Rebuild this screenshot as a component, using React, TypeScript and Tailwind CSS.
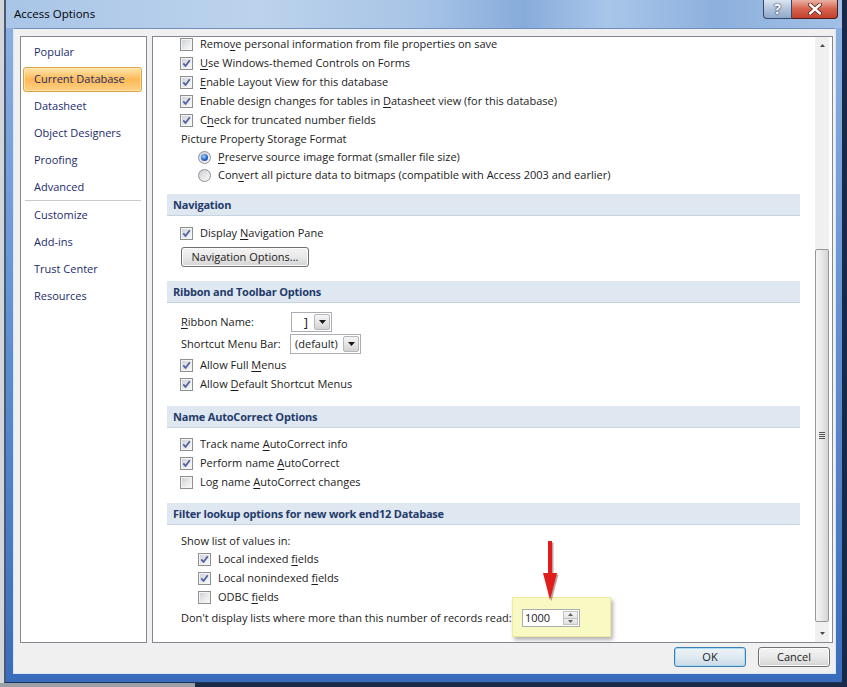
import React from "react";

const U = ({ children }: { children: React.ReactNode }) => (
  <span className="underline decoration-[1px] underline-offset-[2px]">{children}</span>
);

function CheckBox({ checked }: { checked: boolean }) {
  return (
    <span className="flex h-[13px] w-[13px] shrink-0 border border-[#8e8f8f] bg-[#f4f4f4] p-[1px]">
      <span className="flex flex-1 items-center justify-center bg-gradient-to-br from-[#cfd2d6] via-[#e6e7e9] to-[#f8f8f8]">
        {checked && (
          <svg width="9" height="9" viewBox="0 0 9 9">
            <path d="M1.3 4.4 L3.5 7 L7.8 1.3" fill="none" stroke="#4d62a0" strokeWidth="1.8" strokeLinejoin="round" />
          </svg>
        )}
      </span>
    </span>
  );
}

function Radio({ checked }: { checked: boolean }) {
  return (
    <span className="flex h-[13px] w-[13px] shrink-0 items-center justify-center rounded-full border border-[#8e8f8f] bg-gradient-to-br from-[#cdd0d4] to-[#fafafa]">
      {checked && (
        <span className="h-[7px] w-[7px] rounded-full bg-[radial-gradient(circle_at_40%_35%,#a8d6ff,#2563c4_55%,#0f3c8c)]" />
      )}
    </span>
  );
}

function CheckRow({ checked, children, cls }: { checked: boolean; children: React.ReactNode; cls: string }) {
  return (
    <div className={"flex h-[19px] items-center gap-[7px] whitespace-nowrap " + cls}>
      <CheckBox checked={checked} />
      <span className="pb-[2px]">{children}</span>
    </div>
  );
}

function RadioRow({ checked, children }: { checked: boolean; children: React.ReactNode }) {
  return (
    <div className="flex h-[18px] items-center gap-[7px] whitespace-nowrap pl-[45px]">
      <Radio checked={checked} />
      <span className="pb-[2px]">{children}</span>
    </div>
  );
}

function Band({ children, cls }: { children: React.ReactNode; cls: string }) {
  return (
    <div
      className={
        "ml-[14px] mr-[15px] flex h-[22px] items-center border-b border-[#c5d2e0] bg-[#dfe7f0] pl-[6px] font-bold tracking-[-0.2px] text-[#1f3b6b] " +
        cls
      }
    >
      {children}
    </div>
  );
}

function DropBtn() {
  return (
    <span className="my-[1px] mr-[1px] flex w-[16px] items-center justify-center rounded-[2px] border border-[#b4b7bc] bg-gradient-to-b from-[#f5f5f5] via-[#e6e6e6] to-[#d2d2d2]">
      <svg width="7" height="4" viewBox="0 0 7 4">
        <path d="M0 0 H7 L3.5 4 Z" fill="#1a1a1a" />
      </svg>
    </span>
  );
}

function NavItem({ label, active, cls }: { label: string; active?: boolean; cls: string }) {
  return (
    <div
      className={
        "flex h-[25px] items-center rounded-[3px] border pb-[2px] pl-[10px] " +
        (active
          ? "border-[#e0a043] bg-gradient-to-b from-[#fee6a8] via-[#fcb955] to-[#fdd184] shadow-[inset_0_0_0_1px_rgba(255,240,200,0.6)] "
          : "border-transparent ") +
        cls
      }
    >
      {label}
    </div>
  );
}

function TitleBar() {
  return (
    <div className="flex h-[28px] shrink-0 justify-between bg-[linear-gradient(90deg,#a9c5e7_0%,#bcd3ec_30%,#a7c3e6_50%,#87acdb_62%,#a9c6e9_72%,#8cb0dd_85%,#a2c0e5_100%)]">
      <div className="pl-[8px] pt-[8px] text-[11.5px] text-black">Access Options</div>
      <div className="mr-[4px] flex h-[19px]">
        <div className="flex w-[29px] items-center justify-center rounded-bl-[4px] border border-t-0 border-[#34496b] bg-gradient-to-b from-[#dbe5f1] via-[#b2c4dc] to-[#8fa8ca] text-[14px] font-bold text-white [text-shadow:0_0_2px_#22324d,0_0_1px_#22324d]">
          ?
        </div>
        <div className="flex w-[46px] items-center justify-center rounded-br-[4px] border border-l-0 border-t-0 border-[#4a1d1a] bg-gradient-to-b from-[#eab1a5] via-[#d4624d] to-[#c2412c]">
          <svg width="14" height="12" viewBox="0 0 14 12">
            <path d="M2 1.5 L12 10.5 M12 1.5 L2 10.5" stroke="#5a1a12" strokeWidth="4" strokeLinecap="round" />
            <path d="M2 1.5 L12 10.5 M12 1.5 L2 10.5" stroke="#ffffff" strokeWidth="2.4" strokeLinecap="round" />
          </svg>
        </div>
      </div>
    </div>
  );
}

function Scrollbar() {
  return (
    <div className="mr-[3px] flex w-[14px] shrink-0 flex-col bg-[#f0f0f0]">
      <div className="flex h-[17px] items-center justify-center">
        <svg width="5" height="3" viewBox="0 0 5 3">
          <path d="M0 3 L2.5 0 L5 3 Z" fill="#4a4a4a" />
        </svg>
      </div>
      <div className="h-[195px]" />
      <div className="flex h-[373px] items-center justify-center rounded-[2px] border border-[#979797] bg-gradient-to-r from-[#f4f4f4] via-[#e8e8e8] to-[#d4d4d4]">
        <div className="flex flex-col gap-[1px]">
          <div className="h-[1px] w-[6px] bg-[#555]" />
          <div className="h-[1px] w-[6px] bg-[#555]" />
          <div className="h-[1px] w-[6px] bg-[#555]" />
          <div className="h-[1px] w-[6px] bg-[#555]" />
        </div>
      </div>
      <div className="flex-1" />
      <div className="flex h-[17px] items-center justify-center">
        <svg width="5" height="3" viewBox="0 0 5 3">
          <path d="M0 0 L2.5 3 L5 0 Z" fill="#4a4a4a" />
        </svg>
      </div>
    </div>
  );
}

export default function App() {
  return (
    <div className="flex h-[687px] w-[847px] flex-col overflow-hidden bg-[#1b2a47] font-['Open_Sans',sans-serif] text-[11px] leading-none text-[#1b1b1b]">
      <div className="flex h-[683px] shrink-0">
        <div className="w-[4px] bg-[#d3d7dc]" />
        <div className="flex flex-1 flex-col border-b border-l-[2px] border-r-[5px] border-b-[#1e3358] border-l-[#4a5a72] border-r-[#172848] bg-gradient-to-b from-[#8eb2e2] via-[#5f8fd2] to-[#3a6cbc]">
          <TitleBar />
          <div className="mb-[8px] ml-[7px] mr-[6px] flex flex-1 flex-col border border-[#dbe6f3] border-t-[#6f8db5] bg-[#f0f0f0] pl-[6px] pr-[2px] pt-[7px]">
            <div className="flex h-[607px] gap-[5px]">
              {/* Left navigation */}
              <div className="flex w-[127px] shrink-0 flex-col border border-[#828790] bg-white pl-[2px] pr-[4px] pt-[3px] text-[#1c2c6c]">
                <NavItem label="Popular" cls="" />
                <NavItem label="Current Database" active cls="mt-[2px]" />
                <NavItem label="Datasheet" cls="mt-[2px]" />
                <NavItem label="Object Designers" cls="mt-[2px]" />
                <NavItem label="Proofing" cls="mt-[2px]" />
                <NavItem label="Advanced" cls="mt-[2px]" />
                <div className="ml-[2px] mr-[1px] h-[2px] border-t border-[#c9c9c9] bg-white" />
                <NavItem label="Customize" cls="mt-[1px]" />
                <NavItem label="Add-ins" cls="mt-[2px]" />
                <NavItem label="Trust Center" cls="mt-[2px]" />
                <NavItem label="Resources" cls="mt-[2px]" />
              </div>

              {/* Right content */}
              <div className="flex flex-1 border border-[#828790] bg-white">
                <div className="flex-1 overflow-hidden">
                  <div className="-mt-[2px] flex flex-col">
                    <CheckRow checked={false} cls="pl-[27px]">
                      Remo<U>v</U>e personal information from file properties on save
                    </CheckRow>
                    <CheckRow checked cls="pl-[27px]">
                      <U>U</U>se Windows-themed Controls on Forms
                    </CheckRow>
                    <CheckRow checked cls="pl-[27px]">
                      <U>E</U>nable Layout View for this database
                    </CheckRow>
                    <CheckRow checked cls="pl-[27px]">
                      Enable design changes for tables in <U>D</U>atasheet view (for this database)
                    </CheckRow>
                    <CheckRow checked cls="pl-[27px]">
                      C<U>h</U>eck for truncated number fields
                    </CheckRow>
                    <div className="flex h-[18px] items-center pb-[2px] pl-[28px]">Picture Property Storage Format</div>
                    <RadioRow checked>
                      <U>P</U>reserve source image format (smaller file size)
                    </RadioRow>
                    <RadioRow checked={false}>
                      Con<U>v</U>ert all picture data to bitmaps (compatible with Access 2003 and earlier)
                    </RadioRow>

                    <Band cls="mt-[10px]">Navigation</Band>
                    <CheckRow checked cls="mt-[8px] pl-[27px]">
                      Display <U>N</U>avigation Pane
                    </CheckRow>
                    <div className="mt-[4px] flex pl-[28px]">
                      <button className="flex h-[20px] w-[128px] items-center justify-center rounded-[3px] border border-[#707070] bg-gradient-to-b from-[#f4f4f4] via-[#e9e9e9] to-[#d3d3d3] pb-[1px] text-[#1b1b1b] shadow-[inset_0_0_0_1px_#fbfbfb]">
                        Navigation Options...
                      </button>
                    </div>

                    <Band cls="mt-[14px]">Ribbon and Toolbar Options</Band>
                    <div className="mt-[9px] flex h-[20px] items-center pl-[28px]">
                      <span className="w-[110px] shrink-0 pb-[2px]">
                        <U>R</U>ibbon Name:
                      </span>
                      <span className="flex h-[20px] w-[41px] border border-[#abadb3] bg-white">
                        <span className="flex flex-1 items-center justify-end pr-[6px] text-[13px]">]</span>
                        <DropBtn />
                      </span>
                    </div>
                    <div className="mt-[2px] flex h-[20px] items-center pl-[28px]">
                      <span className="w-[109px] shrink-0 pb-[2px]">Shortcut Menu Bar:</span>
                      <span className="flex h-[20px] w-[71px] border border-[#abadb3] bg-white">
                        <span className="flex flex-1 items-center pb-[1px] pl-[4px]">(default)</span>
                        <DropBtn />
                      </span>
                    </div>
                    <CheckRow checked cls="mt-[2px] pl-[27px]">
                      Allow Full <U>M</U>enus
                    </CheckRow>
                    <CheckRow checked cls="pl-[27px]">
                      Allow <U>D</U>efault Shortcut Menus
                    </CheckRow>

                    <Band cls="mt-[12px]">Name AutoCorrect Options</Band>
                    <CheckRow checked cls="mt-[7px] pl-[27px]">
                      Track name <U>A</U>utoCorrect info
                    </CheckRow>
                    <CheckRow checked cls="pl-[27px]">
                      Perform name <U>A</U>utoCorrect
                    </CheckRow>
                    <CheckRow checked={false} cls="pl-[27px]">
                      Log name <U>A</U>utoCorrect changes
                    </CheckRow>

                    <Band cls="mt-[11px]">Filter lookup options for new work end12 Database</Band>
                    <div className="mt-[7px] flex h-[18px] items-center pb-[2px] pl-[28px]">Show list of values in:</div>
                    <CheckRow checked cls="pl-[45px]">
                      Local indexed <U>f</U>ields
                    </CheckRow>
                    <CheckRow checked cls="pl-[45px]">
                      Local nonindexed <U>f</U>ields
                    </CheckRow>
                    <CheckRow checked={false} cls="pl-[45px]">
                      ODBC <U>f</U>ields
                    </CheckRow>
                    <div className="mt-[1px] flex h-[20px] items-center pl-[28px]">
                      <span className="w-[341px] shrink-0 whitespace-nowrap pb-[2px]">
                        Don't display lists where more than this number of records read:
                      </span>
                      <span className="relative flex h-[18px] w-[58px]">
                        <span className="absolute -left-[10px] -top-[12px] h-[40px] w-[99px] border border-[#ecec9c] bg-[#f9f9c4] shadow-[2px_3px_4px_rgba(0,0,0,0.3)]" />
                        <span className="relative flex h-[18px] w-[58px] border border-[#abadb3] bg-white">
                          <span className="flex flex-1 items-center pb-[1px] pl-[2px]">1000</span>
                          <span className="my-[1px] mr-[1px] flex w-[15px] flex-col border border-[#c3c3c3]">
                            <span className="flex flex-1 items-center justify-center border-b border-[#c3c3c3] bg-gradient-to-b from-[#f6f6f6] to-[#e4e4e4]">
                              <svg width="5" height="3" viewBox="0 0 5 3">
                                <path d="M0 3 L2.5 0 L5 3 Z" fill="#606060" />
                              </svg>
                            </span>
                            <span className="flex flex-1 items-center justify-center bg-gradient-to-b from-[#f0f0f0] to-[#dedede]">
                              <svg width="5" height="3" viewBox="0 0 5 3">
                                <path d="M0 0 L2.5 3 L5 0 Z" fill="#606060" />
                              </svg>
                            </span>
                          </span>
                        </span>
                        <svg className="absolute left-[19px] -top-[68px]" width="20" height="62" viewBox="0 0 20 62">
                          <g fill="rgba(60,0,0,0.35)" transform="translate(1.5,1.5)">
                            <rect x="7" y="0" width="4" height="35" />
                            <path d="M2 32 H16 L9 59 Z" />
                          </g>
                          <g fill="#e01c1c">
                            <rect x="7" y="0" width="4" height="35" />
                            <path d="M2 32 H16 L9 59 Z" />
                          </g>
                        </svg>
                      </span>
                    </div>
                  </div>
                </div>
                <Scrollbar />
              </div>
            </div>

            <div className="mt-[4px] flex justify-end gap-[12px] pr-[3px]">
              <button className="flex h-[20px] w-[72px] items-center justify-center rounded-[3px] border border-[#3c7fb1] bg-gradient-to-b from-[#eef4f8] via-[#e0eaf1] to-[#cbdae5] pb-[1px] text-[#1b1b1b] shadow-[inset_0_0_0_1px_#a9dcf6]">
                OK
              </button>
              <button className="flex h-[20px] w-[72px] items-center justify-center rounded-[3px] border border-[#707070] bg-gradient-to-b from-[#f4f4f4] via-[#e9e9e9] to-[#d3d3d3] pb-[1px] text-[#1b1b1b] shadow-[inset_0_0_0_1px_#fbfbfb]">
                Cancel
              </button>
            </div>
          </div>
        </div>
      </div>
      <div className="flex flex-1">
        <div className="w-[195px] bg-[#9aa0a8]" />
        <div className="flex-1 bg-[#1b2a47]" />
      </div>
    </div>
  );
}
